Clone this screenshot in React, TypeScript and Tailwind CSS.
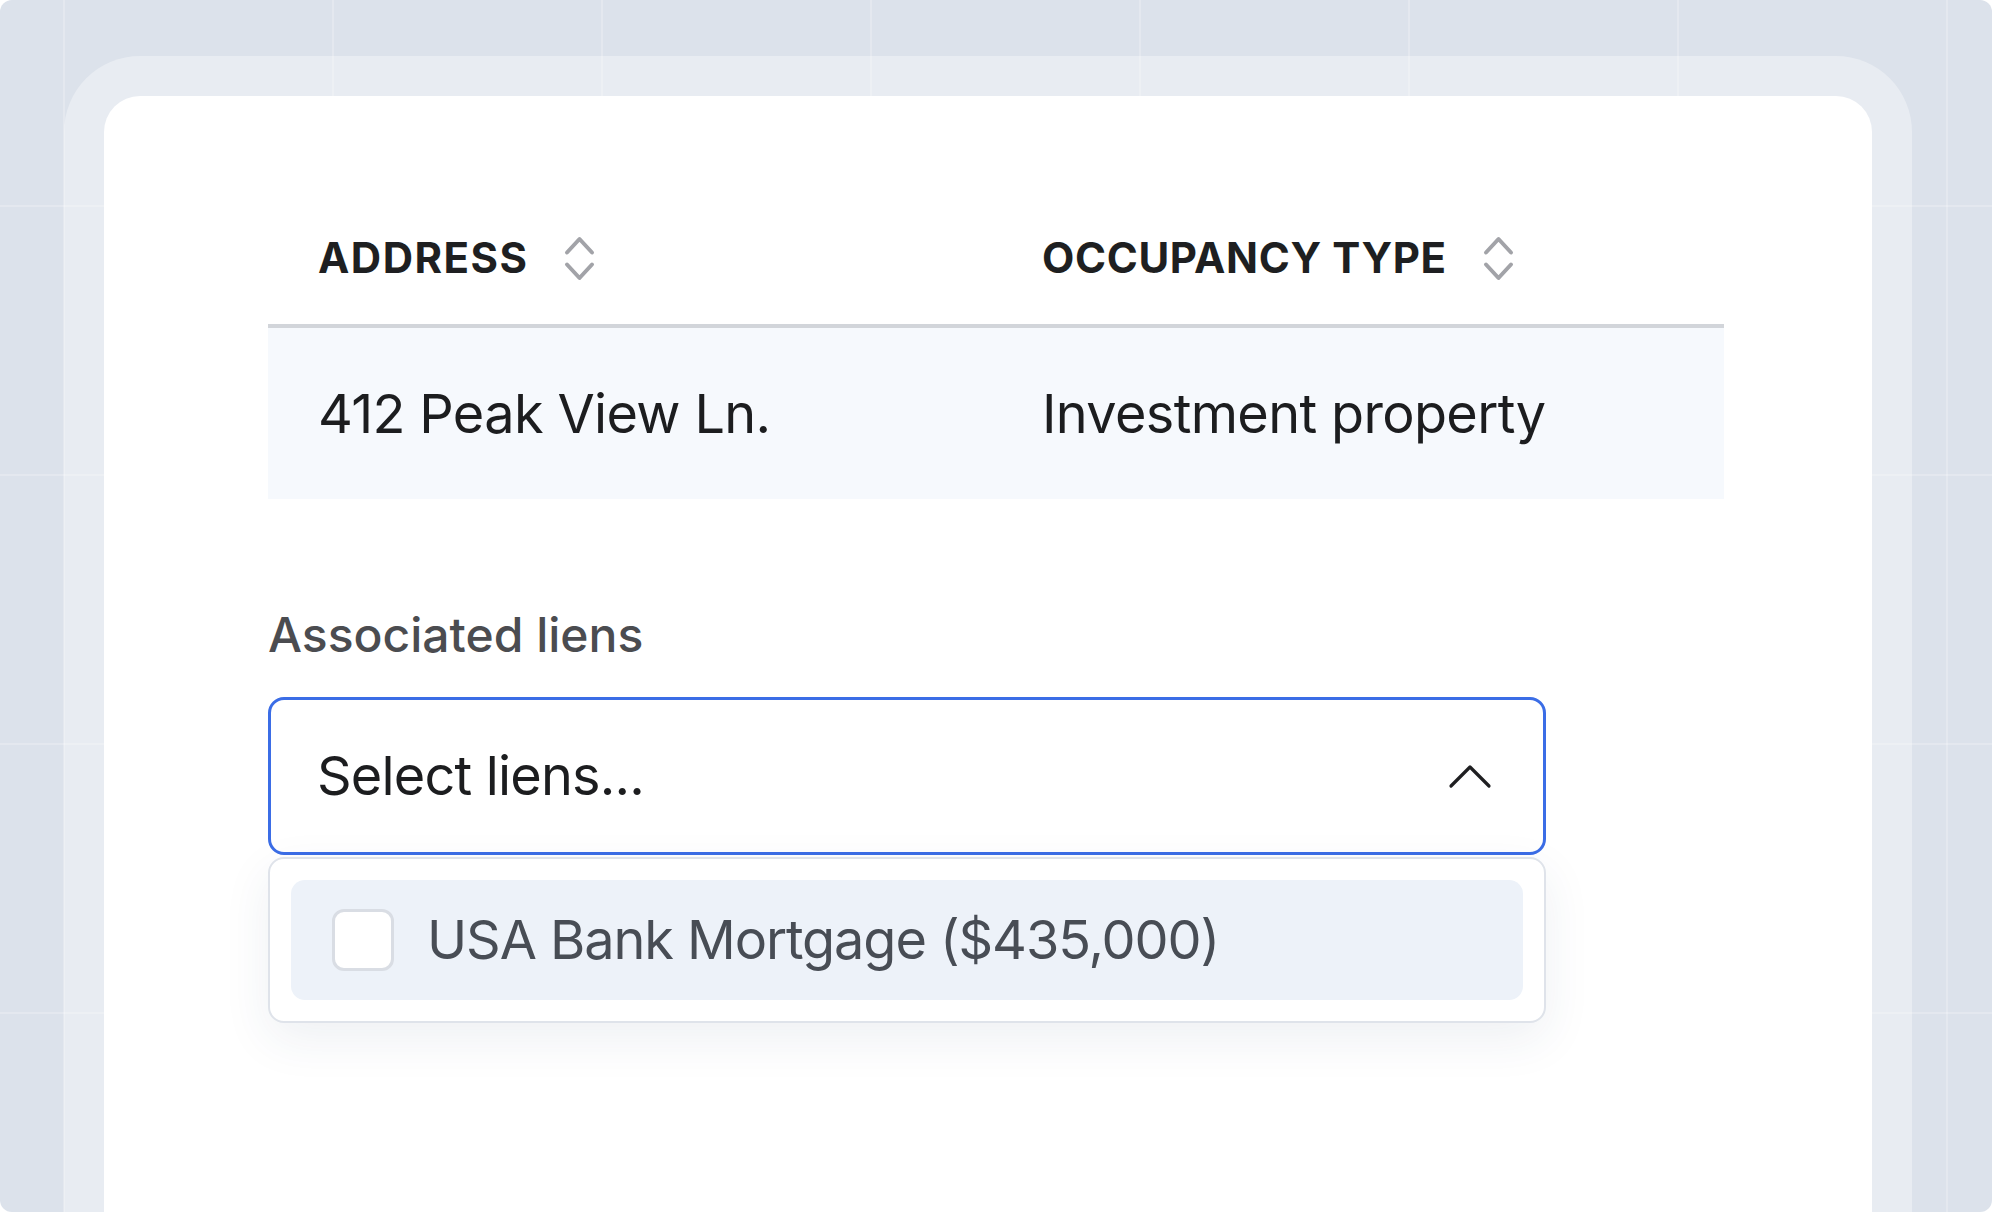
function SortIcon() {
  return (
    <svg width="31" height="47" viewBox="0 0 31 47" fill="none" className="shrink-0">
      <path d="M3 17.5 L15.5 4 L28 17.5" stroke="#a2a3a8" strokeWidth="4" strokeLinecap="round" strokeLinejoin="round" />
      <path d="M3 29.5 L15.5 43 L28 29.5" stroke="#a2a3a8" strokeWidth="4" strokeLinecap="round" strokeLinejoin="round" />
    </svg>
  );
}

function ChevronUpIcon() {
  return (
    <svg width="44" height="27" viewBox="0 0 44 27" fill="none" className="shrink-0">
      <path d="M3 23 L22 4 L41 23" stroke="#1f1f21" strokeWidth="3.2" strokeLinecap="round" strokeLinejoin="round" />
    </svg>
  );
}

function HeaderCell({ label, wide }: { label: string; wide?: boolean }) {
  return (
    <div className="flex h-[132px] items-center gap-[36px] pl-[50px]">
      <span
        className={
          wide
            ? "text-[42px] font-bold uppercase leading-none tracking-[0.035em] text-[#1e1f21]"
            : "text-[42px] font-bold uppercase leading-none tracking-[0.015em] text-[#1e1f21]"
        }
      >
        {label}
      </span>
      <SortIcon />
    </div>
  );
}

export default function App() {
  return (
    <div className="min-h-[1212px] bg-white font-['Inter','Noto_Sans',sans-serif]">
      <div className="relative h-[1212px] overflow-hidden rounded-[12px] bg-[#dce2eb] bg-[linear-gradient(to_right,rgba(255,255,255,0.22)_2px,transparent_2px),linear-gradient(to_bottom,rgba(255,255,255,0.22)_2px,transparent_2px)] bg-[size:269px_269px] bg-[position:63px_205px]">
        {/* frame */}
        <div className="ml-[64px] mt-[56px] h-[1200px] w-[1848px] rounded-t-[76px] bg-white/35 px-[40px] pt-[40px]">
          {/* card */}
          <div className="h-full rounded-t-[36px] bg-white pl-[164px] pt-[96px]">
            {/* table */}
            <div className="w-[1456px]">
              <div className="grid grid-cols-[724px_1fr] border-b-[4px] border-[#d2d5da]">
                <HeaderCell label="Address" wide />
                <HeaderCell label="Occupancy type" />
              </div>
              <div className="grid h-[171px] grid-cols-[724px_1fr] items-center bg-[#f6f9fd] text-[54px] leading-none tracking-[-0.012em] text-[#1c1d1f]">
                <div className="pl-[50px]">412 Peak View Ln.</div>
                <div className="pl-[50px]">Investment property</div>
              </div>
            </div>

            {/* liens field */}
            <div className="mt-[108px] w-[1278px]">
              <div className="text-[48px] font-medium leading-[56px] text-[#4b4c50]">
                Associated liens
              </div>
              <div className="mt-[34px] flex h-[158px] items-center justify-between rounded-[16px] border-[3px] border-[#3b6de6] bg-white pl-[46px] pr-[51px]">
                <span className="text-[54px] leading-none tracking-[-0.015em] text-[#1c1d1f]">Select liens...</span>
                <ChevronUpIcon />
              </div>
              <div className="mt-[2px] rounded-[16px] border-2 border-[#dfe3ea] bg-white p-[21px] shadow-[0_16px_48px_rgba(40,60,100,0.08)]">
                <div className="flex h-[120px] items-center gap-[33px] rounded-[14px] bg-[#edf2f9] pl-[41px]">
                  <div className="h-[62px] w-[62px] rounded-[12px] border-[3px] border-[#d9dde4] bg-white" />
                  <span className="text-[54px] leading-none tracking-[-0.02em] text-[#484d55]">
                    USA Bank Mortgage ($435,000)
                  </span>
                </div>
              </div>
            </div>
          </div>
        </div>
      </div>
    </div>
  );
}
